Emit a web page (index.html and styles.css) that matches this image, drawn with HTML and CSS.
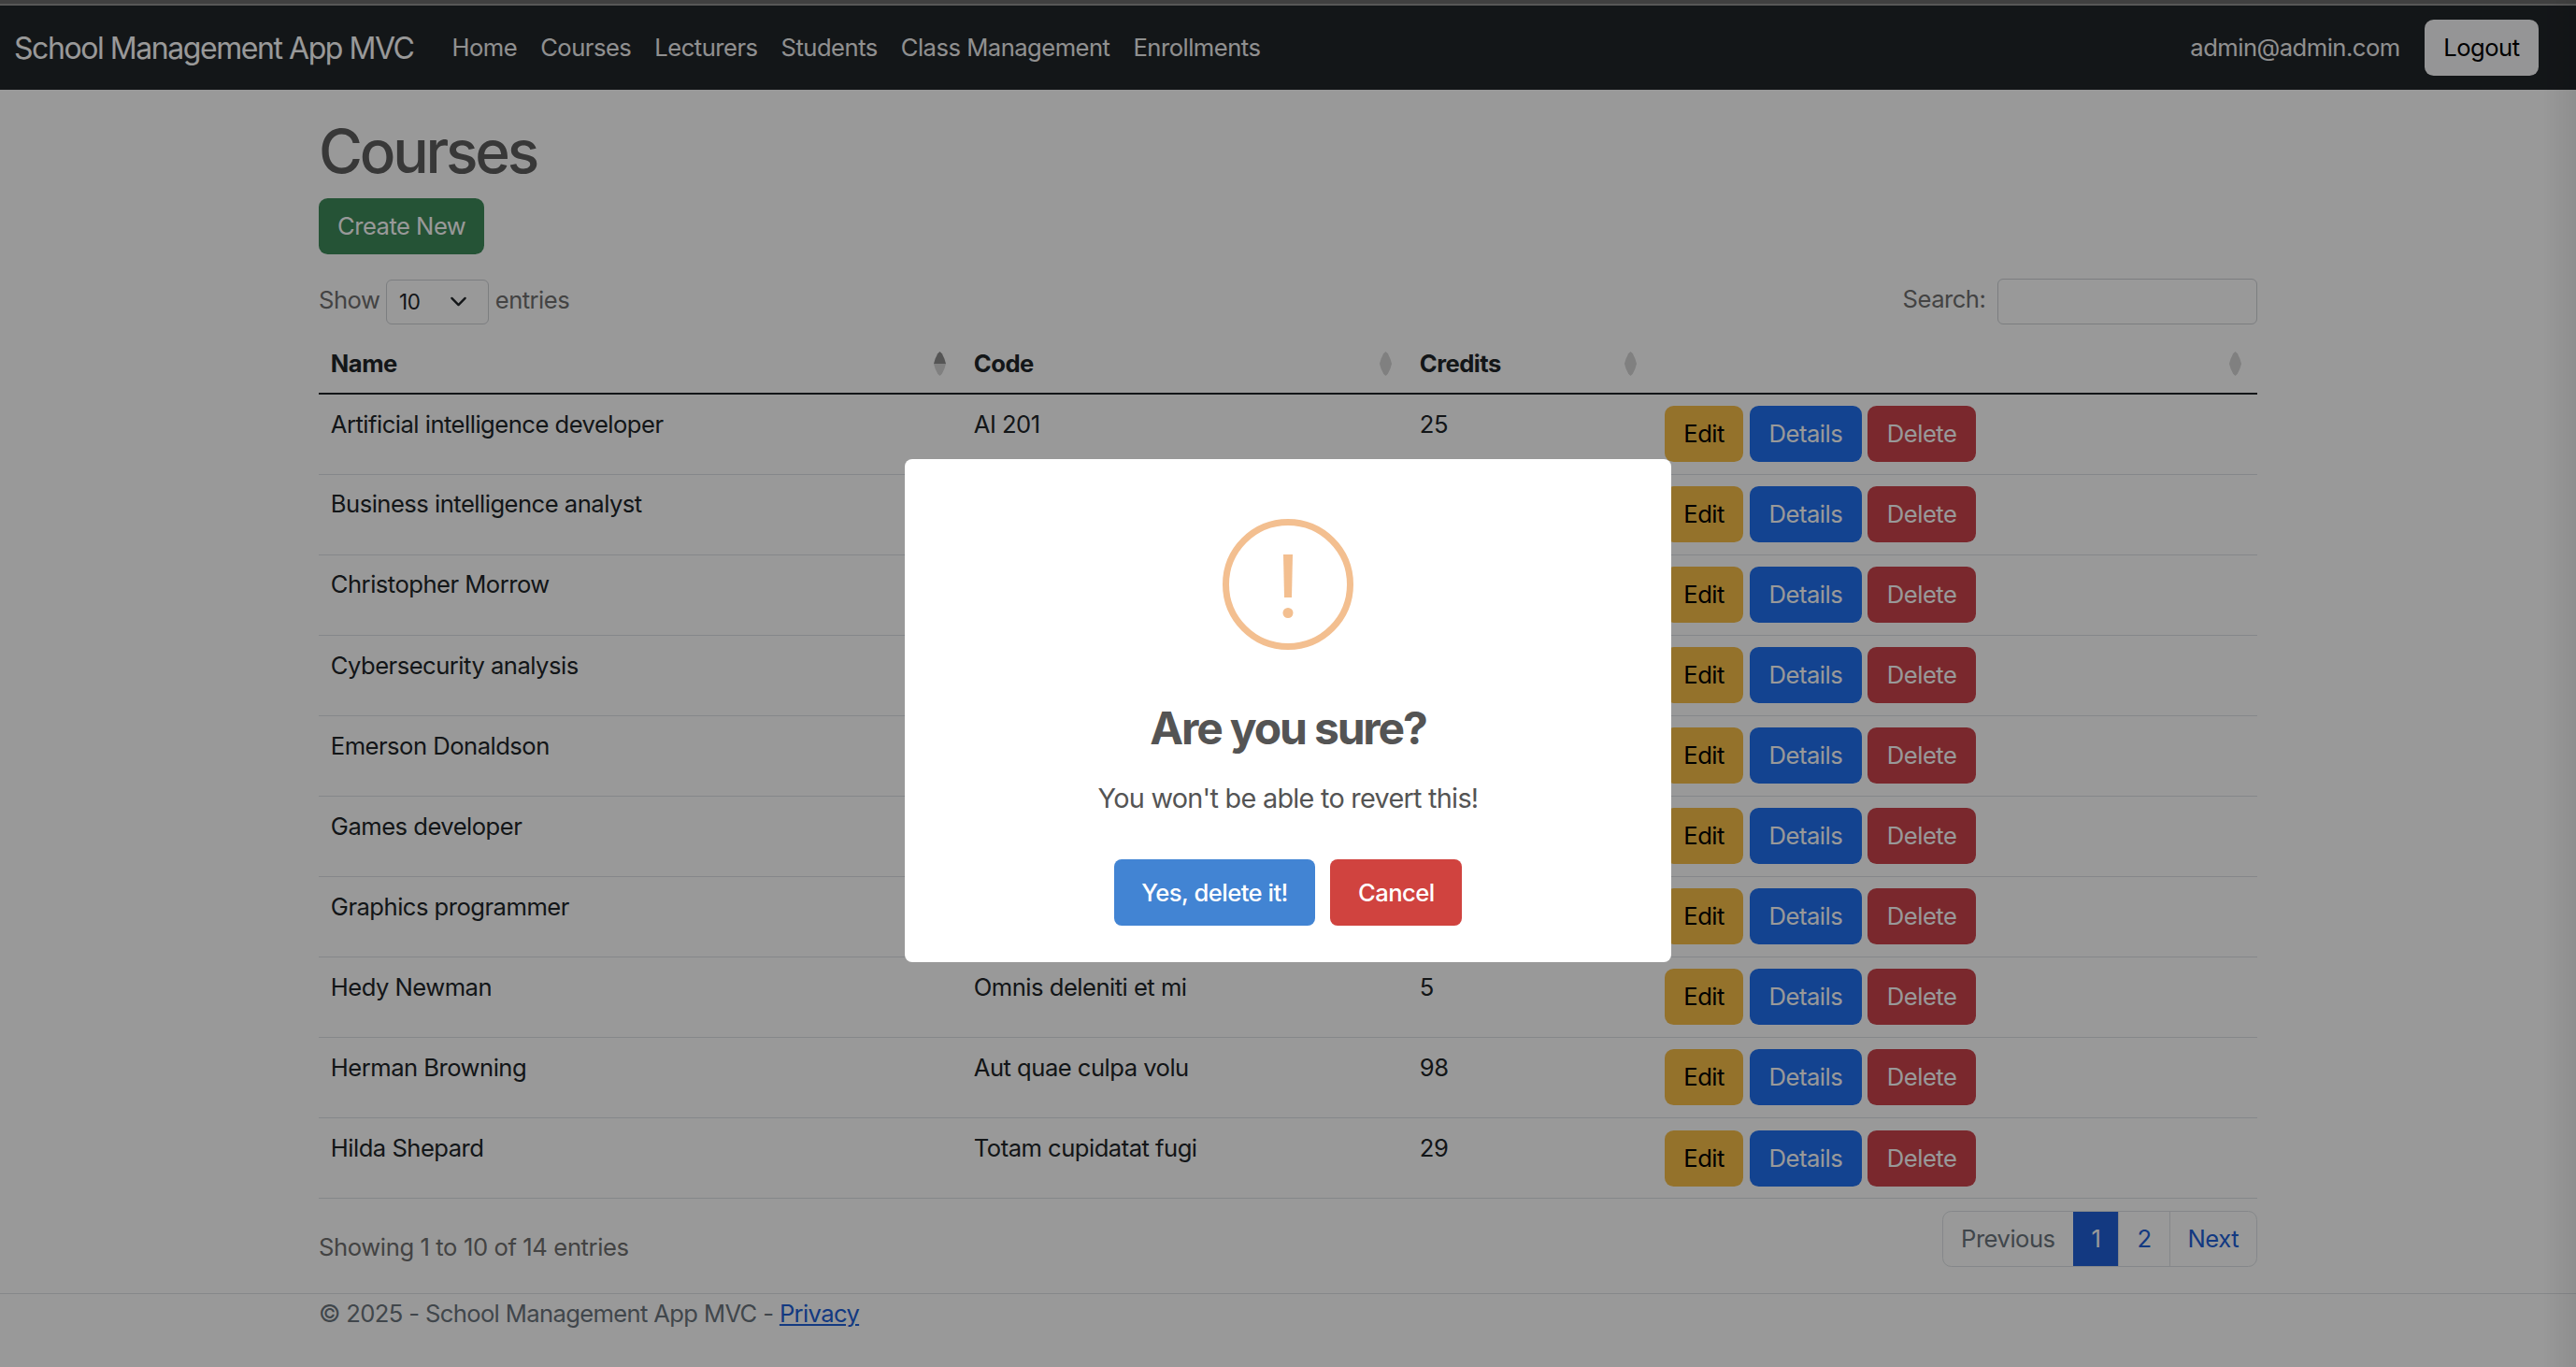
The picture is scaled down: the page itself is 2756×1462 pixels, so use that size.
FILE: index.html
```html
<!DOCTYPE html>
<html lang="en">
<head>
    <meta charset="UTF-8">
    <title>Courses - School Management App MVC</title>
    <link rel="stylesheet" href="styles.css">
</head>
<body>

    <div class="top-strip"></div>

    <nav class="navbar">
        <a class="brand" href="#">School Management App MVC</a>
        <ul class="nav-links">
            <li><a href="#">Home</a></li>
            <li><a href="#">Courses</a></li>
            <li><a href="#">Lecturers</a></li>
            <li><a href="#">Students</a></li>
            <li><a href="#">Class Management</a></li>
            <li><a href="#">Enrollments</a></li>
        </ul>
        <div class="nav-user">
            <span class="nav-email">admin@admin.com</span>
            <button class="btn btn-light">Logout</button>
        </div>
    </nav>

    <main class="container">
        <h1>Courses</h1>
        <button class="btn btn-success">Create New</button>

        <div class="table-controls">
            <label class="length">Show
                <span class="select">10
                    <svg class="select-arrow" viewBox="0 0 16 16"><path d="M2 5l6 6 6-6" fill="none" stroke="currentColor" stroke-width="2" stroke-linecap="round" stroke-linejoin="round"/></svg>
                </span>
                entries</label>
            <label class="search">Search: <span class="search-input"></span></label>
        </div>

        <table class="courses">
            <colgroup>
                <col class="col-name"><col class="col-code"><col class="col-credits"><col>
            </colgroup>
            <thead>
                <tr>
                    <th class="sorted">Name</th>
                    <th>Code</th>
                    <th>Credits</th>
                    <th></th>
                </tr>
            </thead>
            <tbody>
                <tr><td>Artificial intelligence developer</td><td>AI 201</td><td>25</td><td class="actions"><a class="btn btn-warning">Edit</a> <a class="btn btn-primary">Details</a> <a class="btn btn-danger">Delete</a></td></tr>
                <tr><td>Business intelligence analyst</td><td></td><td></td><td class="actions"><a class="btn btn-warning">Edit</a> <a class="btn btn-primary">Details</a> <a class="btn btn-danger">Delete</a></td></tr>
                <tr><td>Christopher Morrow</td><td></td><td></td><td class="actions"><a class="btn btn-warning">Edit</a> <a class="btn btn-primary">Details</a> <a class="btn btn-danger">Delete</a></td></tr>
                <tr><td>Cybersecurity analysis</td><td></td><td></td><td class="actions"><a class="btn btn-warning">Edit</a> <a class="btn btn-primary">Details</a> <a class="btn btn-danger">Delete</a></td></tr>
                <tr><td>Emerson Donaldson</td><td></td><td></td><td class="actions"><a class="btn btn-warning">Edit</a> <a class="btn btn-primary">Details</a> <a class="btn btn-danger">Delete</a></td></tr>
                <tr><td>Games developer</td><td></td><td></td><td class="actions"><a class="btn btn-warning">Edit</a> <a class="btn btn-primary">Details</a> <a class="btn btn-danger">Delete</a></td></tr>
                <tr><td>Graphics programmer</td><td></td><td></td><td class="actions"><a class="btn btn-warning">Edit</a> <a class="btn btn-primary">Details</a> <a class="btn btn-danger">Delete</a></td></tr>
                <tr><td>Hedy Newman</td><td>Omnis deleniti et mi</td><td>5</td><td class="actions"><a class="btn btn-warning">Edit</a> <a class="btn btn-primary">Details</a> <a class="btn btn-danger">Delete</a></td></tr>
                <tr><td>Herman Browning</td><td>Aut quae culpa volu</td><td>98</td><td class="actions"><a class="btn btn-warning">Edit</a> <a class="btn btn-primary">Details</a> <a class="btn btn-danger">Delete</a></td></tr>
                <tr><td>Hilda Shepard</td><td>Totam cupidatat fugi</td><td>29</td><td class="actions"><a class="btn btn-warning">Edit</a> <a class="btn btn-primary">Details</a> <a class="btn btn-danger">Delete</a></td></tr>
            </tbody>
        </table>

        <div class="table-footer">
            <div class="info">Showing 1 to 10 of 14 entries</div>
            <ul class="pagination">
                <li class="page-prev">Previous</li>
                <li class="page-active">1</li>
                <li>2</li>
                <li>Next</li>
            </ul>
        </div>
    </main>

    <footer class="footer">
        <div class="container">&copy; 2025 - School Management App MVC - <a href="#">Privacy</a></div>
    </footer>

    <div class="backdrop">
        <div class="modal">
            <svg class="modal-icon" viewBox="0 0 140 140">
                <circle cx="70" cy="70" r="66.5" fill="none" stroke="#f3bf90" stroke-width="7"/>
                <polygon points="65,38 75,38 74,84 66,84" fill="#f3bf90"/>
                <circle cx="70" cy="100.500" r="5.500" fill="#f3bf90"/>
            </svg>
            <h2 class="modal-title">Are you sure?</h2>
            <p class="modal-text">You won't be able to revert this!</p>
            <div class="modal-actions">
                <button class="modal-btn modal-confirm">Yes, delete it!</button>
                <button class="modal-btn modal-cancel">Cancel</button>
            </div>
        </div>
    </div>

</body>
</html>
```

FILE: styles.css
```css
html {
    font-size: 25.6px;
}

body {
    font-family: Inter, "Liberation Sans", sans-serif;
    font-size: 1rem;
    line-height: 1.5;
    margin: 0;
    background-color: #ffffff;
    color: #212529;
    letter-spacing: -0.02em;
}

a {
    color: #2060d8;
}

.top-strip {
    height: 6px;
    box-sizing: border-box;
    background-color: #6c6c6c;
    border-bottom: 2px solid #929292;
}

.navbar {
    display: flex;
    align-items: center;
    height: 90px;
    padding: 1px 40px 0 15px;
    box-sizing: border-box;
    background-color: #212529;
}

.brand {
    font-size: 32px;
    letter-spacing: -0.045em;
    color: #ffffff;
    text-decoration: none;
    margin-right: 41px;
}

.nav-links {
    display: flex;
    gap: 25px;
    list-style: none;
    margin: 0;
    padding: 0;
}

.nav-links a {
    color: #f0f0f0;
    text-decoration: none;
}

.nav-user {
    display: flex;
    align-items: center;
    gap: 26px;
    margin-left: auto;
}

.nav-email {
    color: #f0f0f0;
}

.btn {
    display: inline-block;
    height: 60px;
    line-height: 58px;
    padding: 0 19px;
    box-sizing: border-box;
    border: 1px solid transparent;
    border-radius: 9.6px;
    font-family: inherit;
    font-size: 1rem;
    letter-spacing: inherit;
    text-decoration: none;
}

.btn-light { background-color: #f8f9fa; color: #000000; padding: 0 19.500px; margin-top: -1px; }
.btn-success { background-color: #3e8a5a; color: #ffffff; }
.btn-warning { background-color: #f7be49; color: #000000; }
.btn-primary { background-color: #2070f0; color: #ffffff; }
.btn-danger { background-color: #cc444c; color: #ffffff; }

.container {
    width: 2074px;
    margin: 0 auto;
}

h1 {
    font-size: 64px;
    font-weight: 500;
    line-height: 1.2;
    margin: 0;
    padding: 28px 0 0;
    height: 116px;
    box-sizing: border-box;
    letter-spacing: -0.05em;
    color: #5e5e5e;
}

.table-controls {
    display: flex;
    justify-content: space-between;
    align-items: center;
    margin-top: 26px;
    height: 49px;
    color: #707070;
}

.select {
    display: inline-flex;
    align-items: center;
    justify-content: space-between;
    width: 110px;
    height: 48px;
    padding: 0 22px 0 13px;
    box-sizing: border-box;
    border: 1.5px solid #cfd2d6;
    border-radius: 6px;
    font-size: 22.400px;
    color: #212529;
    vertical-align: middle;
}

.select-arrow {
    width: 19px;
    height: 19px;
}

.search-input {
    display: inline-block;
    width: 278px;
    height: 49px;
    margin-left: 6px;
    box-sizing: border-box;
    border: 1.5px solid #cfd2d6;
    border-radius: 6px;
    vertical-align: middle;
}

.courses {
    width: 100%;
    margin-top: 12px;
    border-collapse: collapse;
    table-layout: fixed;
}

.col-name { width: 688px; }
.col-code { width: 477px; }
.col-credits { width: 262px; }

.courses th {
    position: relative;
    height: 62px;
    padding: 0 12.800px;
    box-sizing: border-box;
    border-bottom: 2px solid #212529;
    text-align: left;
    font-weight: 700;
}

/* sort arrows, two rounded triangles that touch */
.courses th::before,
.courses th::after {
    content: "";
    position: absolute;
    right: 17px;
    width: 13px;
    height: 13px;
    background-color: #d5d5d5;
}

.courses th::before {
    top: 17px;
    clip-path: polygon(50% 0, 68% 18%, 88% 60%, 100% 100%, 0 100%, 12% 60%, 32% 18%);
}

.courses th::after {
    top: 30px;
    clip-path: polygon(0 0, 100% 0, 88% 40%, 68% 82%, 50% 100%, 32% 82%, 12% 40%);
}

.courses th.sorted::before {
    background-color: #8e8e8e;
}

.courses td {
    height: 86.100px;
    padding: 12.800px;
    box-sizing: border-box;
    border-bottom: 1px solid #dee2e6;
    vertical-align: top;
    line-height: 1.5;
}

.courses td.actions {
    padding-top: 12.200px;
    padding-bottom: 0;
}

.actions .btn {
    padding: 0 19.500px;
}

.table-footer {
    display: flex;
    justify-content: space-between;
    align-items: flex-start;
    margin-top: 13px;
    height: 88px;
}

.info {
    padding-top: 20px;
    letter-spacing: -0.015em;
    color: #707070;
}

.pagination {
    display: flex;
    list-style: none;
    margin: 0;
    padding: 0;
    height: 60px;
    box-sizing: border-box;
    border: 1px solid #dee2e6;
    border-radius: 9.6px;
    color: #2060d8;
    overflow: hidden;
}

.pagination li {
    padding: 0 19px;
    line-height: 58px;
    border-left: 1px solid #dee2e6;
}

.pagination .page-prev {
    border-left: 0;
    color: #6c757d;
}

.pagination .page-active {
    background-color: #2060d8;
    border-color: #2060d8;
    color: #ffffff;
}

.footer {
    border-top: 1px solid #dee2e6;
    line-height: 41px;
    letter-spacing: -0.025em;
    color: #6c757d;
}

.backdrop {
    position: fixed;
    inset: 0;
    display: grid;
    place-items: center;
    padding-top: 58px;
    box-sizing: border-box;
    background: linear-gradient(to right, rgba(0, 0, 0, 0) calc(100% - 36px), rgba(0, 0, 0, 0.07)), rgba(0, 0, 0, 0.4);
}

.modal {
    display: flex;
    flex-direction: column;
    align-items: center;
    width: 820px;
    height: 538px;
    padding-top: 64px;
    box-sizing: border-box;
    background-color: #ffffff;
    border-radius: 8px;
    color: #545454;
}

.modal-icon {
    width: 140px;
    height: 140px;
}

.modal-title {
    font-size: 48px;
    font-weight: 700;
    line-height: 1.2;
    letter-spacing: -0.045em;
    margin: 55px 0 0;
}

.modal-text {
    font-size: 28.800px;
    line-height: 1.5;
    letter-spacing: -0.025em;
    margin: 24px 0 0;
}

.modal-actions {
    display: flex;
    gap: 16px;
    margin-top: 44px;
}

.modal-btn {
    height: 71px;
    padding: 0 29.500px;
    border: 0;
    border-radius: 8px;
    font-family: inherit;
    font-size: 1rem;
    font-weight: 500;
    letter-spacing: -0.02em;
    color: #ffffff;
}

.modal-confirm { background-color: #4284d3; }
.modal-cancel { background-color: #d0433f; }
```
